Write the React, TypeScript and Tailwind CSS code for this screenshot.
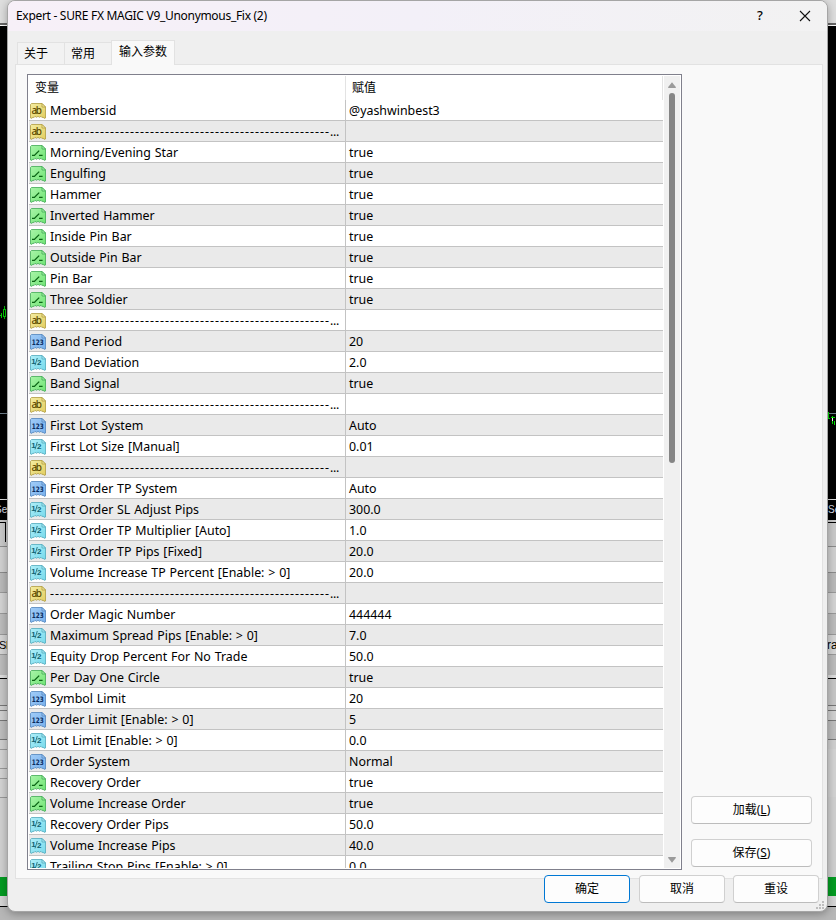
import React, { useState } from 'react';

type ParamType = 'string' | 'bool' | 'int' | 'double';

interface Param {
  type: ParamType;
  name: string;
  value: string;
}

interface Strip {
  height: number;
  className: string;
}

const DASHES = '-'.repeat(56);

const params: Param[] = [
  { type: 'string', name: 'Membersid', value: '@yashwinbest3' },
  { type: 'string', name: DASHES, value: '' },
  { type: 'bool', name: 'Morning/Evening Star', value: 'true' },
  { type: 'bool', name: 'Engulfing', value: 'true' },
  { type: 'bool', name: 'Hammer', value: 'true' },
  { type: 'bool', name: 'Inverted Hammer', value: 'true' },
  { type: 'bool', name: 'Inside Pin Bar', value: 'true' },
  { type: 'bool', name: 'Outside Pin Bar', value: 'true' },
  { type: 'bool', name: 'Pin Bar', value: 'true' },
  { type: 'bool', name: 'Three Soldier', value: 'true' },
  { type: 'string', name: DASHES, value: '' },
  { type: 'int', name: 'Band Period', value: '20' },
  { type: 'double', name: 'Band Deviation', value: '2.0' },
  { type: 'bool', name: 'Band Signal', value: 'true' },
  { type: 'string', name: DASHES, value: '' },
  { type: 'int', name: 'First Lot System', value: 'Auto' },
  { type: 'double', name: 'First Lot Size [Manual]', value: '0.01' },
  { type: 'string', name: DASHES, value: '' },
  { type: 'int', name: 'First Order TP System', value: 'Auto' },
  { type: 'double', name: 'First Order SL Adjust Pips', value: '300.0' },
  { type: 'double', name: 'First Order TP Multiplier [Auto]', value: '1.0' },
  { type: 'double', name: 'First Order TP Pips [Fixed]', value: '20.0' },
  { type: 'double', name: 'Volume Increase TP Percent [Enable: > 0]', value: '20.0' },
  { type: 'string', name: DASHES, value: '' },
  { type: 'int', name: 'Order Magic Number', value: '444444' },
  { type: 'double', name: 'Maximum Spread Pips [Enable: > 0]', value: '7.0' },
  { type: 'double', name: 'Equity Drop Percent For No Trade', value: '50.0' },
  { type: 'bool', name: 'Per Day One Circle', value: 'true' },
  { type: 'int', name: 'Symbol Limit', value: '20' },
  { type: 'int', name: 'Order Limit [Enable: > 0]', value: '5' },
  { type: 'double', name: 'Lot Limit [Enable: > 0]', value: '0.0' },
  { type: 'int', name: 'Order System', value: 'Normal' },
  { type: 'bool', name: 'Recovery Order', value: 'true' },
  { type: 'bool', name: 'Volume Increase Order', value: 'true' },
  { type: 'double', name: 'Recovery Order Pips', value: '50.0' },
  { type: 'double', name: 'Volume Increase Pips', value: '40.0' },
  { type: 'double', name: 'Trailing Stop Pips [Enable: > 0]', value: '0.0' },
];

// ── Terminal window behind the dialog ──────────────────────────────────────────

const terminalRows: Strip[] = [
  { height: 26, className: 'bg-[#d0d0d0] border-t border-[#8b8b8b]' },
  { height: 20, className: 'bg-[#b9b9b9] border-t border-[#8b8b8b]' },
  { height: 21, className: 'bg-[#d3d3d3] border-t border-[#999]' },
  { height: 21, className: 'bg-[#bcbcbc] border-t border-[#999]' },
];

const lowerRows: Strip[] = [
  { height: 21, className: 'bg-[#bcbcbc] border-t border-[#999]' },
  { height: 3, className: 'bg-[#ddd]' },
  { height: 1, className: 'bg-black' },
  { height: 26, className: 'bg-[#c7c7c7]' },
  { height: 5, className: 'bg-[#d0d0d0] border-t border-[#777]' },
  { height: 10, className: 'bg-[#d0d0d0] border-t border-[#777]' },
  { height: 19, className: 'bg-[#bdbdbd] border-t border-[#777]' },
];

const StripView = ({ strip }: { strip: Strip }) => (
  <div className={`shrink-0 ${strip.className}`} style={{ height: strip.height }} />
);

const TerminalEdge = ({ side }: { side: 'left' | 'right' }) => {
  const left = side === 'left';
  return (
    <div className="flex w-5 flex-col overflow-hidden">
      <div className="h-[23px] shrink-0 bg-[#dedede]" />
      <div className="h-0.5 shrink-0 bg-[#666]" />
      <div className="h-px shrink-0 bg-white" />
      <div className="h-[494px] shrink-0 bg-black">
        <svg width="20" height="494" viewBox="0 26 20 494" shapeRendering="crispEdges">
          <path d="M0 413.5H20" stroke="#71808c" />
          <path d="M0 499.5H20" stroke="#ddd" />
          {left ? (
            <path d="M0 315.5h1M1.5 313v5M4.5 306v3M4.5 317v2M3.5 309.5h2v7h-2z" stroke="#00c800" fill="none" />
          ) : (
            <>
              <path d="M12.5 412v7M12 418.5h2M16.5 416v8M15 417.5h4M18.5 421v4" stroke="#00dc00" fill="none" />
              <path d="M16 418h1v3h-1z" fill="#fff" />
            </>
          )}
          <text
            x={left ? -5 : 12}
            y="513"
            fontSize="10"
            fontFamily="Liberation Sans, sans-serif"
            fill="#d6dce6"
          >
            {left ? 'Sep' : 'Se'}
          </text>
        </svg>
      </div>
      <div className="h-[26px] shrink-0 bg-[#c9c9c9] pt-0.5">
        <div className={`border-t border-black ${left ? 'h-5 w-1.5 border-r' : 'h-px w-full'}`} />
      </div>
      {terminalRows.map((strip, i) => (
        <StripView key={i} strip={strip} />
      ))}
      <div
        className={`h-5 shrink-0 border-t border-[#999] bg-[#d5d5d5] font-['Liberation_Sans',sans-serif] leading-5 whitespace-nowrap text-black ${
          left ? '-ml-px text-[11px] tracking-[-0.5px]' : 'pl-[11px] text-xs'
        }`}
      >
        {left ? 'SI' : 'ra'}
      </div>
      {lowerRows.map((strip, i) => (
        <StripView key={i} strip={strip} />
      ))}
      <div className="h-2.5 shrink-0 border-t border-[#777] bg-[#cfcfcf]" />
      <div className={`h-[19px] shrink-0 bg-[#d3d3d3] ${left ? 'border-t border-[#999]' : ''}`} />
      <div className={`h-2.5 shrink-0 bg-[#d3d3d3] ${left ? 'border-t border-[#999]' : ''}`} />
      <div className={`h-[19px] shrink-0 bg-[#d3d3d3] ${left ? 'border-t border-[#999]' : ''}`} />
      <div className={`h-[80px] shrink-0 bg-[#d0d0d0] ${left ? 'border-t border-[#999]' : ''}`} />
      <div className="h-[19px] shrink-0 bg-[#049b22]" />
      <div className="h-2.5 shrink-0 bg-[#d5d5d5]" />
      <div className="h-px shrink-0 bg-black" />
      <div className="flex-1 bg-[#b7b7b7]" />
    </div>
  );
};

// ── Icons ──────────────────────────────────────────────────────────────────────

const iconColors: Record<ParamType, { from: string; to: string; edge: string; ink: string }> = {
  string: { from: '#f4eca0', to: '#e2ce60', edge: '#b09c40', ink: '#5c4a00' },
  bool: { from: '#a8f4a8', to: '#70e474', edge: '#40aa54', ink: '#0a6414' },
  int: { from: '#a0ccf8', to: '#78b0ec', edge: '#5084bc', ink: '#0a2c60' },
  double: { from: '#aeeef8', to: '#78daec', edge: '#50aabc', ink: '#12606e' },
};

const TypeIcon = ({ type, id }: { type: ParamType; id: string }) => {
  const c = iconColors[type];
  return (
    <svg width="16" height="16" viewBox="0 0 16 16" className="shrink-0">
      <defs>
        <linearGradient id={id} x1="0" y1="0" x2="1" y2="1">
          <stop offset="0" stopColor={c.from} />
          <stop offset="1" stopColor={c.to} />
        </linearGradient>
      </defs>
      {/* torn sheet with a folded corner */}
      <path
        d="M.5 1.5l1-1H12l3.5 3.5v11l-1.5.3-1-1.3-1 .6-1-1.3-1.5 1-1.5-1-1.5 1-1.5-1-1 1.3-1-.6-1 1.3-1.5-.3z"
        fill={`url(#${id})`}
        stroke={c.edge}
        strokeWidth="0.8"
      />
      <path d="M12 .5V4h3.5z" fill={c.from} stroke={c.edge} strokeWidth="0.8" />
      {type === 'bool' && (
        <path d="M2 10.4h2.4l4.8-4.8M9 10.4h3.6" fill="none" stroke={c.ink} strokeWidth="1.3" />
      )}
      {type === 'string' && (
        <text x="1.4" y="11.4" fontSize="10" textLength="10.6" fontFamily="Noto Sans, sans-serif" fontWeight="500" fill={c.ink}>
          ab
        </text>
      )}
      {type === 'int' && (
        <text x="1.8" y="11.2" fontSize="7.4" textLength="12" lengthAdjust="spacingAndGlyphs" fontFamily="DejaVu Sans, sans-serif" fontWeight="700" fill={c.ink}>
          123
        </text>
      )}
      {type === 'double' && (
        <g fontFamily="Liberation Sans, sans-serif" fontSize="8" fontWeight="700" fill={c.ink}>
          <text x="1.3" y="9">1</text>
          <path d="M7.3 3L5 10.4" stroke={c.ink} strokeWidth="0.8" />
          <text x="7" y="10.4">2</text>
        </g>
      )}
    </svg>
  );
};

// ── Dialog pieces ──────────────────────────────────────────────────────────────

const TitleBar = () => (
  <div className="flex h-[30px] shrink-0 items-center bg-gradient-to-r from-[#f7f0f8] via-[#f3f0f8] to-[#f2f2f2] pl-2">
    <span className="flex-1 text-[12px] tracking-[-0.3px]">Expert - SURE FX MAGIC V9_Unonymous_Fix (2)</span>
    <button className="w-[45px] pl-px text-center text-[13px] font-medium" aria-label="Help">
      ?
    </button>
    <button className="flex w-[45px] items-center justify-center" aria-label="Close">
      <svg width="12" height="12" viewBox="0 0 12 12">
        <path d="M1 1l10 10M11 1L1 11" stroke="#111" strokeWidth="1.1" />
      </svg>
    </button>
  </div>
);

const tabs = ['关于', '常用', '输入参数'];

const TabBar = ({ active, onSelect }: { active: number; onSelect: (i: number) => void }) => (
  <div className="flex h-[33px] shrink-0 items-end pl-[9px]">
    {tabs.map((tab, i) => (
      <button
        key={tab}
        onClick={() => onSelect(i)}
        className={`border-t border-l border-[#e2e2e2] text-left text-[12px] leading-[21px] ${
          i === active
            ? 'relative z-10 -mb-px h-[25px] w-16 border-r bg-[#f9f9f9] pb-[3px] pl-[7px]'
            : 'h-[22px] w-[47px] bg-[#f2f2f2] pl-1.5'
        }`}
      >
        {tab}
      </button>
    ))}
  </div>
);

const ScrollBar = () => (
  <div className="flex w-4 shrink-0 flex-col items-center bg-[#f0f0f0] pt-1.5 pb-[5px]">
    <svg width="8" height="6" viewBox="0 0 8 6">
      <path d="M4 0.3L7.8 5v1H.2V5z" fill="#9a9a9a" />
    </svg>
    <div className="mt-[5px] h-[370px] w-1.5 rounded-full bg-[#858585]" />
    <div className="flex-1" />
    <svg width="8" height="6" viewBox="0 0 8 6">
      <path d="M4 5.7L7.8 1V0H.2v1z" fill="#9a9a9a" />
    </svg>
  </div>
);

const ParamRow = ({ param, index }: { param: Param; index: number }) => (
  <div
    className={`flex h-[21px] shrink-0 border-b border-[#c3c3c3] text-[12.4px] leading-[22px] whitespace-nowrap ${
      index % 2 ? 'bg-[#eaeaea]' : 'bg-white'
    }`}
  >
    <div className="flex w-[317px] gap-1 overflow-hidden border-r border-[#c3c3c3] pl-px">
      <div className="pt-[3px]">
        <TypeIcon type={param.type} id={`icon-${index}`} />
      </div>
      {param.name === DASHES ? (
        <span className="tracking-[1.01px]">
          {DASHES}
          <span className="tracking-[-0.3px]">...</span>
        </span>
      ) : (
        <span className="[word-spacing:0.6px]">{param.name}</span>
      )}
    </div>
    <div className="pl-[3px]">{param.value}</div>
  </div>
);

const ParamTable = () => (
  <div className="flex h-[796px] w-[655px] shrink-0 border border-[#80808c] bg-white p-px">
    <div className="flex flex-1 flex-col overflow-hidden">
      <div className="flex h-6 shrink-0 text-[12px] leading-[23px]">
        <div className="w-[317px] border-r border-[#e3e3e3] pl-1.5">变量</div>
        <div className="flex-1 border-r border-[#e3e3e3] pl-1.5">赋值</div>
      </div>
      {params.map((param, i) => (
        <ParamRow key={i} param={param} index={i} />
      ))}
    </div>
    <div className="w-px shrink-0" />
    <ScrollBar />
  </div>
);

interface ButtonProps {
  children: React.ReactNode;
  className: string;
  primary?: boolean;
}

const Button = ({ children, className, primary = false }: ButtonProps) => (
  <button
    className={`h-7 rounded-[4px] border bg-[#fdfdfd] text-center text-[12px] ${
      primary ? 'border-[#0078d4]' : 'border-[#d0d0d0] border-b-[#bcbcbc]'
    } ${className}`}
  >
    {children}
  </button>
);

const ResizeGrip = () => (
  <svg width="8" height="8" viewBox="0 0 8 8" className="absolute right-[3px] bottom-0.5" fill="#bdbdbd">
    <path d="M6 0h2v2H6zM3 3h2v2H3zM6 3h2v2H6zM0 6h2v2H0zM3 6h2v2H3zM6 6h2v2H6z" />
  </svg>
);

export default function App() {
  const [activeTab, setActiveTab] = useState(2);

  return (
    <div className="relative h-[920px] w-[836px] overflow-hidden bg-[#b7b7b7] font-['Noto_Sans','Noto_Sans_CJK_SC',sans-serif] text-black">
      <div className="absolute inset-0 flex justify-between">
        <TerminalEdge side="left" />
        <TerminalEdge side="right" />
      </div>

      <div className="relative ml-[7px] flex h-[912px] w-[821px] flex-col overflow-hidden rounded-lg border border-[#a5a5a5] bg-[#efefef] shadow-[0_2px_8px_rgba(0,0,0,0.3)]">
        <TitleBar />
        <TabBar active={activeTab} onSelect={setActiveTab} />

        {/* Tab page */}
        <div className="ml-[7px] flex h-[815px] w-[808px] shrink-0 gap-[9px] border border-[#e2e2e2] bg-[#f9f9f9] pt-[9px] pl-[11px]">
          <ParamTable />
          <div className="flex flex-col gap-[15px] pt-[722px]">
            <Button className="w-[121px]">
              加载(<u>L</u>)
            </Button>
            <Button className="w-[121px]">
              保存(<u>S</u>)
            </Button>
          </div>
        </div>

        {/* Footer buttons overlap the page's bottom edge */}
        <div className="relative -mt-1 flex justify-end gap-2 pr-2">
          <Button primary className="mr-px w-[86px]">确定</Button>
          <Button className="w-[86px]">取消</Button>
          <Button className="w-[86px]">重设</Button>
        </div>
        <ResizeGrip />
      </div>
    </div>
  );
}
